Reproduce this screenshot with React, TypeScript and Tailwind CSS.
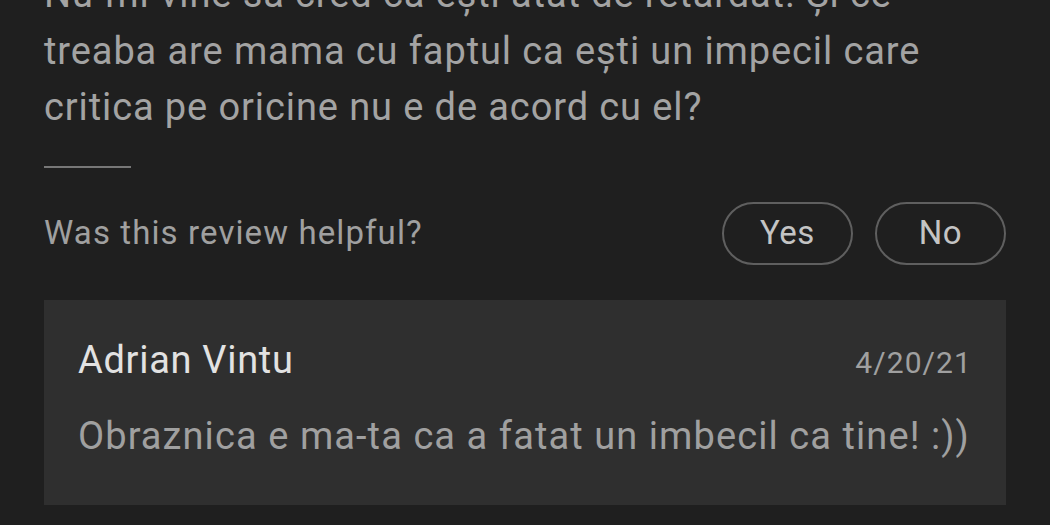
const body = "Nu-mi vine sa cred ca ești atat de retardat. Și ce treaba are mama cu faptul ca ești un impecil care critica pe oricine nu e de acord cu el?";

function PillButton({ label }: { label: string }) {
  return (
    <button className="flex h-[63px] w-[131px] items-center justify-center rounded-full border-2 border-[#5f5f5f] text-[33px] tracking-[0.5px] text-[#c4c4c4]">
      {label}
    </button>
  );
}

export default function App() {
  return (
    <div className="h-[525px] w-[1050px] overflow-hidden bg-[#1f1f1f] px-[44px] font-['Roboto',sans-serif] tracking-[1px]">
      <p className="-mt-[34px] w-[935px] text-[38px] leading-[56.5px] tracking-[0.9px] text-[#a3a3a3]">{body}</p>

      <div className="mt-[30px] h-[2px] w-[87px] bg-[#777777]" />

      <div className="mt-[34px] flex items-center justify-between">
        <span className="text-[33px] tracking-[1.1px] text-[#a0a0a0]">Was this review helpful?</span>
        <div className="flex gap-[22px]">
          <PillButton label="Yes" />
          <PillButton label="No" />
        </div>
      </div>

      <div className="mt-[35px] h-[205px] bg-[#2f2f2f] px-[34px] pt-[36px]">
        <div className="flex items-baseline justify-between">
          <span className="text-[38px] leading-[48px] tracking-[0.7px] text-[#e2e2e2]">Adrian Vintu</span>
          <span className="text-[30px] tracking-[1.1px] text-[#a0a0a0]">4/20/21</span>
        </div>
        <p className="mt-[27px] text-[38px] leading-[48px] tracking-[1.08px] text-[#a0a0a0]">
          Obraznica e ma-ta ca a fatat un imbecil ca tine! :))
        </p>
      </div>
    </div>
  );
}
